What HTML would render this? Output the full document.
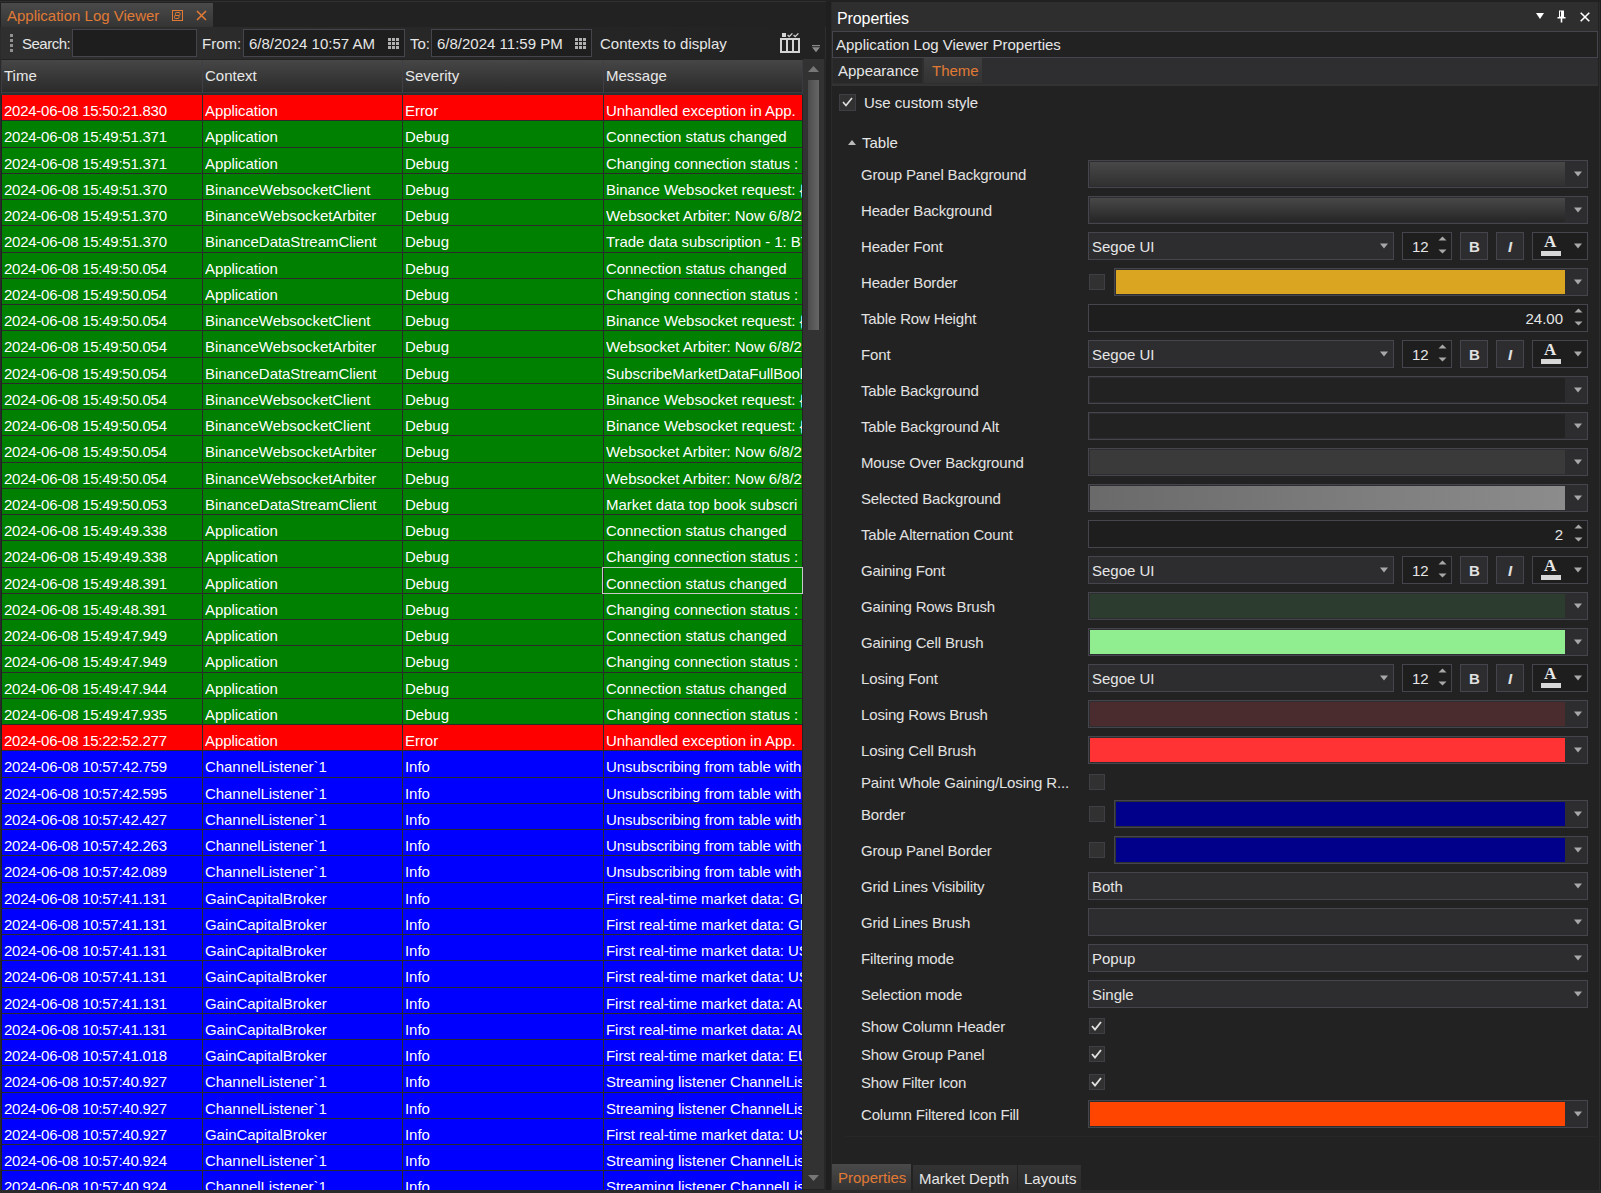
<!DOCTYPE html>
<html><head><meta charset="utf-8">
<style>
*{box-sizing:border-box;margin:0;padding:0}
html,body{width:1601px;height:1193px;overflow:hidden;background:#1f1f1f;font-family:"Liberation Sans",sans-serif;font-size:15px;color:#e6e6e6}
.a{position:absolute}
/* left doc panel */
#docpanel{position:absolute;left:0;top:2px;width:826px;height:1188px;background:#222;border-left:1px solid #2a2a2a;border-right:1px solid #2e2e2e}
#tabstrip{position:absolute;left:0;top:2px;width:826px;height:25px;background:#222}
#doctab{position:absolute;left:1px;top:3px;width:212px;height:24px;background:linear-gradient(#4a4a4a,#343434);}
#doctab .t{position:absolute;left:6px;top:4px;color:#e07a35;font-size:15px;white-space:nowrap}
#toolbar{position:absolute;left:1px;top:27px;width:824px;height:32px;background:linear-gradient(90deg,#2f2f2f,#262626 60%,#222)}
.grip{position:absolute;left:9px;width:3px;height:3px;background:#909090}
.tl{position:absolute;white-space:nowrap;color:#e6e6e6}
.box{position:absolute;background:#1e1e1e;border:1px solid #45454d}
.gicon{position:absolute;width:11px;height:11px}
/* table */
#hdr{position:absolute;left:1px;top:60px;width:802px;height:35px;background:linear-gradient(#464646,#2a2a2a);border-left:1px solid #3c3c42;border-right:1px solid #3a3a40;border-bottom:2px solid #283034;box-shadow:inset 0 -1px 0 #3c3c42}
.hs{position:absolute;top:0;width:1px;height:33px;background:#3e3e44}
.ht{position:absolute;top:7px;white-space:nowrap;color:#e8e8e8}
#body{position:absolute;left:2px;top:95px;width:800px;height:1095px;background:#2a2a2a;overflow:hidden}
.row{position:absolute;left:0;width:800px;color:#fff;white-space:nowrap;letter-spacing:-0.05px}
.row .c1{letter-spacing:-0.25px}
.row span{position:absolute;top:7px;overflow:hidden}
.c1{left:2px;width:198px}
.c2{left:203px;width:197px}
.c3{left:403px;width:198px}
.c4{left:604px;width:196px}
.vl{position:absolute;top:95px;width:1px;height:1095px;background:#2a2a2a}
#scroll{position:absolute;left:803px;top:59px;width:21px;height:1130px;background:#323232}
#thumb{position:absolute;left:5px;top:21px;width:11px;height:250px;background:linear-gradient(90deg,#4c4c4c,#666)}
/* properties panel */
#ppanel{position:absolute;left:831px;top:2px;width:769px;height:1188px;background:#222;border-left:1px solid #2a2a2a;border-right:1px solid #2c2c2c}
#ptbar{position:absolute;left:832px;top:2px;width:766px;height:84px;background:#2e2e2e}
#ptitle{position:absolute;left:837px;top:10px;font-size:16px;color:#fff;letter-spacing:-0.1px}
#phead{position:absolute;left:832px;top:31px;width:766px;height:27px;background:#222;border:1px solid #45454d}
#phead span{position:absolute;left:3px;top:4px}
#ptabs{position:absolute;left:832px;top:58px;width:766px;height:28px;background:#2e2e30;border-bottom:2px solid #333}
.ptab{position:absolute;top:0;height:25px;white-space:nowrap}
.ptab span{position:absolute;left:5px;top:4px}
#pcontent{position:absolute;left:832px;top:86px;width:766px;height:1077px;background:#222}
.plabel{position:absolute;left:861px;white-space:nowrap;color:#e2e2e2;letter-spacing:-0.15px;height:26px;line-height:26px;margin-top:1px}
.ed{position:absolute;height:28px;background:#2d2d30;border:1px solid #45454d}
.ed .sw{position:absolute;left:1px;top:1px;right:22px;bottom:1px}
.ed .dd{position:absolute;right:5px;top:10px}
.ed.num{background:#1e1e1e}
.nv{position:absolute;right:24px;top:5px}
.spin{position:absolute;right:4px;top:3px}
.fv{position:absolute;left:3px;top:5px}
.fsize{background:#1e1e1e}
.fsv{position:absolute;left:9px;top:5px}
.btn b{position:absolute;left:8px;top:5px;font-weight:bold;color:#e0e0e0}
.btn i{position:absolute;left:11px;top:5px;font-weight:bold;color:#e0e0e0}
.fcol{background:#1e1e1e}
.fa{position:absolute;left:11px;top:-1px;font-family:"Liberation Serif",serif;font-size:17px;font-weight:bold;color:#e8e8e8}
.fbar{position:absolute;left:8px;top:18px;width:20px;height:5px;background:#d8d8d8}
.cb{position:absolute;width:17px;height:17px;background:#313131;border:1px solid #3e3e44}
.btab{position:absolute;height:26px;white-space:nowrap;background:linear-gradient(#333,#2a2a2a)}
.btab span{position:absolute;left:6px;top:5px}
</style></head><body>
<!-- top dark strip -->
<div class="a" style="left:0;top:0;width:1601px;height:2px;background:#212121"></div>
<div class="a" style="left:0;top:1px;width:826px;height:1px;background:#303030"></div>

<div id="docpanel"></div>
<div id="tabstrip"></div>
<div id="doctab"><span class="t">Application Log Viewer</span>
  <svg class="a" style="left:171px;top:7px" width="11" height="11" viewBox="0 0 11 11"><rect x="0.5" y="0.5" width="10" height="10" fill="none" stroke="#e07a35" stroke-width="1"/><rect x="3.5" y="2.5" width="4.5" height="3" rx="0.8" fill="none" stroke="#e07a35" stroke-width="1"/><rect x="2.5" y="5.5" width="4.5" height="3" rx="0.8" fill="none" stroke="#e07a35" stroke-width="1"/></svg>
  <svg class="a" style="left:195px;top:7px" width="11" height="11" viewBox="0 0 11 11"><path d="M1 1L10 10M10 1L1 10" stroke="#e07a35" stroke-width="1.6"/></svg>
</div>
<div id="toolbar">
  <div class="grip" style="top:7px"></div><div class="grip" style="top:12px"></div><div class="grip" style="top:17px"></div><div class="grip" style="top:22px"></div>
</div>
<span class="tl" style="left:22px;top:35px;letter-spacing:-0.5px">Search:</span>
<div class="box" style="left:72px;top:29px;width:125px;height:28px"></div>
<span class="tl" style="left:202px;top:35px">From:</span>
<div class="box" style="left:243px;top:29px;width:162px;height:28px"></div>
<span class="tl" style="left:249px;top:35px">6/8/2024 10:57 AM</span>
<svg class="gicon" style="left:388px;top:38px" viewBox="0 0 11 11" width="11" height="11"><g fill="#b0b0b0"><rect x="0" y="0" width="3" height="3"/><rect x="4" y="0" width="3" height="3"/><rect x="8" y="0" width="3" height="3"/><rect x="0" y="4" width="3" height="3"/><rect x="4" y="4" width="3" height="3"/><rect x="8" y="4" width="3" height="3"/><rect x="0" y="8" width="3" height="3"/><rect x="4" y="8" width="3" height="3"/><rect x="8" y="8" width="3" height="3"/></g></svg>
<span class="tl" style="left:410px;top:35px">To:</span>
<div class="box" style="left:431px;top:29px;width:161px;height:28px"></div>
<span class="tl" style="left:437px;top:35px">6/8/2024 11:59 PM</span>
<svg class="gicon" style="left:575px;top:38px" viewBox="0 0 11 11" width="11" height="11"><g fill="#b0b0b0"><rect x="0" y="0" width="3" height="3"/><rect x="4" y="0" width="3" height="3"/><rect x="8" y="0" width="3" height="3"/><rect x="0" y="4" width="3" height="3"/><rect x="4" y="4" width="3" height="3"/><rect x="8" y="4" width="3" height="3"/><rect x="0" y="8" width="3" height="3"/><rect x="4" y="8" width="3" height="3"/><rect x="8" y="8" width="3" height="3"/></g></svg>
<span class="tl" style="left:600px;top:35px">Contexts to display</span>
<svg class="a" style="left:779px;top:32px" width="22" height="22" viewBox="0 0 22 22"><rect x="3" y="1" width="4" height="4" fill="#d4d4d4"/><path d="M8.6 3L10.2 4.6L13.4 1.4M14.6 3L16.2 4.6L19.4 1.4" stroke="#d4d4d4" stroke-width="1.3" fill="none"/><rect x="2" y="7" width="18" height="13" fill="none" stroke="#d4d4d4" stroke-width="2"/><path d="M8 7V20M14 7V20" stroke="#d4d4d4" stroke-width="2"/></svg>
<svg class="a" style="left:811px;top:44px" width="10" height="9" viewBox="0 0 10 9"><rect x="1" y="1" width="8" height="1.2" fill="#8a8a8a"/><path d="M1 3.2H9L5 8.2Z" fill="#8a8a8a"/></svg>

<!-- table header -->
<div id="hdr">
  <div class="hs" style="left:200px"></div>
  <div class="hs" style="left:400px"></div>
  <div class="hs" style="left:601px"></div>
  <span class="ht" style="left:2px">Time</span>
  <span class="ht" style="left:203px">Context</span>
  <span class="ht" style="left:403px">Severity</span>
  <span class="ht" style="left:604px">Message</span>
</div>
<div id="body">
<div class="row" style="top:0px;height:25px;background:#ff0000"><span class="c1">2024-06-08 15:50:21.830</span><span class="c2">Application</span><span class="c3">Error</span><span class="c4">Unhandled exception in App.</span></div>
<div class="row" style="top:26px;height:26px;background:#008000"><span class="c1">2024-06-08 15:49:51.371</span><span class="c2">Application</span><span class="c3">Debug</span><span class="c4">Connection status changed</span></div>
<div class="row" style="top:53px;height:25px;background:#008000"><span class="c1">2024-06-08 15:49:51.371</span><span class="c2">Application</span><span class="c3">Debug</span><span class="c4">Changing connection status :</span></div>
<div class="row" style="top:79px;height:25px;background:#008000"><span class="c1">2024-06-08 15:49:51.370</span><span class="c2">BinanceWebsocketClient</span><span class="c3">Debug</span><span class="c4">Binance Websocket request: {'</span></div>
<div class="row" style="top:105px;height:25px;background:#008000"><span class="c1">2024-06-08 15:49:51.370</span><span class="c2">BinanceWebsocketArbiter</span><span class="c3">Debug</span><span class="c4">Websocket Arbiter: Now 6/8/2</span></div>
<div class="row" style="top:131px;height:26px;background:#008000"><span class="c1">2024-06-08 15:49:51.370</span><span class="c2">BinanceDataStreamClient</span><span class="c3">Debug</span><span class="c4">Trade data subscription - 1: BT</span></div>
<div class="row" style="top:158px;height:25px;background:#008000"><span class="c1">2024-06-08 15:49:50.054</span><span class="c2">Application</span><span class="c3">Debug</span><span class="c4">Connection status changed</span></div>
<div class="row" style="top:184px;height:25px;background:#008000"><span class="c1">2024-06-08 15:49:50.054</span><span class="c2">Application</span><span class="c3">Debug</span><span class="c4">Changing connection status :</span></div>
<div class="row" style="top:210px;height:25px;background:#008000"><span class="c1">2024-06-08 15:49:50.054</span><span class="c2">BinanceWebsocketClient</span><span class="c3">Debug</span><span class="c4">Binance Websocket request: {'</span></div>
<div class="row" style="top:236px;height:26px;background:#008000"><span class="c1">2024-06-08 15:49:50.054</span><span class="c2">BinanceWebsocketArbiter</span><span class="c3">Debug</span><span class="c4">Websocket Arbiter: Now 6/8/2</span></div>
<div class="row" style="top:263px;height:25px;background:#008000"><span class="c1">2024-06-08 15:49:50.054</span><span class="c2">BinanceDataStreamClient</span><span class="c3">Debug</span><span class="c4">SubscribeMarketDataFullBook</span></div>
<div class="row" style="top:289px;height:25px;background:#008000"><span class="c1">2024-06-08 15:49:50.054</span><span class="c2">BinanceWebsocketClient</span><span class="c3">Debug</span><span class="c4">Binance Websocket request: {'</span></div>
<div class="row" style="top:315px;height:25px;background:#008000"><span class="c1">2024-06-08 15:49:50.054</span><span class="c2">BinanceWebsocketClient</span><span class="c3">Debug</span><span class="c4">Binance Websocket request: {'</span></div>
<div class="row" style="top:341px;height:26px;background:#008000"><span class="c1">2024-06-08 15:49:50.054</span><span class="c2">BinanceWebsocketArbiter</span><span class="c3">Debug</span><span class="c4">Websocket Arbiter: Now 6/8/2</span></div>
<div class="row" style="top:368px;height:25px;background:#008000"><span class="c1">2024-06-08 15:49:50.054</span><span class="c2">BinanceWebsocketArbiter</span><span class="c3">Debug</span><span class="c4">Websocket Arbiter: Now 6/8/2</span></div>
<div class="row" style="top:394px;height:25px;background:#008000"><span class="c1">2024-06-08 15:49:50.053</span><span class="c2">BinanceDataStreamClient</span><span class="c3">Debug</span><span class="c4">Market data top book subscri</span></div>
<div class="row" style="top:420px;height:25px;background:#008000"><span class="c1">2024-06-08 15:49:49.338</span><span class="c2">Application</span><span class="c3">Debug</span><span class="c4">Connection status changed</span></div>
<div class="row" style="top:446px;height:26px;background:#008000"><span class="c1">2024-06-08 15:49:49.338</span><span class="c2">Application</span><span class="c3">Debug</span><span class="c4">Changing connection status :</span></div>
<div class="row" style="top:473px;height:25px;background:#008000"><span class="c1">2024-06-08 15:49:48.391</span><span class="c2">Application</span><span class="c3">Debug</span><span class="c4">Connection status changed</span></div>
<div class="row" style="top:499px;height:25px;background:#008000"><span class="c1">2024-06-08 15:49:48.391</span><span class="c2">Application</span><span class="c3">Debug</span><span class="c4">Changing connection status :</span></div>
<div class="row" style="top:525px;height:25px;background:#008000"><span class="c1">2024-06-08 15:49:47.949</span><span class="c2">Application</span><span class="c3">Debug</span><span class="c4">Connection status changed</span></div>
<div class="row" style="top:551px;height:26px;background:#008000"><span class="c1">2024-06-08 15:49:47.949</span><span class="c2">Application</span><span class="c3">Debug</span><span class="c4">Changing connection status :</span></div>
<div class="row" style="top:578px;height:25px;background:#008000"><span class="c1">2024-06-08 15:49:47.944</span><span class="c2">Application</span><span class="c3">Debug</span><span class="c4">Connection status changed</span></div>
<div class="row" style="top:604px;height:25px;background:#008000"><span class="c1">2024-06-08 15:49:47.935</span><span class="c2">Application</span><span class="c3">Debug</span><span class="c4">Changing connection status :</span></div>
<div class="row" style="top:630px;height:25px;background:#ff0000"><span class="c1">2024-06-08 15:22:52.277</span><span class="c2">Application</span><span class="c3">Error</span><span class="c4">Unhandled exception in App.</span></div>
<div class="row" style="top:656px;height:26px;background:#0000ff"><span class="c1">2024-06-08 10:57:42.759</span><span class="c2">ChannelListener`1</span><span class="c3">Info</span><span class="c4">Unsubscribing from table with</span></div>
<div class="row" style="top:683px;height:25px;background:#0000ff"><span class="c1">2024-06-08 10:57:42.595</span><span class="c2">ChannelListener`1</span><span class="c3">Info</span><span class="c4">Unsubscribing from table with</span></div>
<div class="row" style="top:709px;height:25px;background:#0000ff"><span class="c1">2024-06-08 10:57:42.427</span><span class="c2">ChannelListener`1</span><span class="c3">Info</span><span class="c4">Unsubscribing from table with</span></div>
<div class="row" style="top:735px;height:25px;background:#0000ff"><span class="c1">2024-06-08 10:57:42.263</span><span class="c2">ChannelListener`1</span><span class="c3">Info</span><span class="c4">Unsubscribing from table with</span></div>
<div class="row" style="top:761px;height:26px;background:#0000ff"><span class="c1">2024-06-08 10:57:42.089</span><span class="c2">ChannelListener`1</span><span class="c3">Info</span><span class="c4">Unsubscribing from table with</span></div>
<div class="row" style="top:788px;height:25px;background:#0000ff"><span class="c1">2024-06-08 10:57:41.131</span><span class="c2">GainCapitalBroker</span><span class="c3">Info</span><span class="c4">First real-time market data: GI</span></div>
<div class="row" style="top:814px;height:25px;background:#0000ff"><span class="c1">2024-06-08 10:57:41.131</span><span class="c2">GainCapitalBroker</span><span class="c3">Info</span><span class="c4">First real-time market data: GI</span></div>
<div class="row" style="top:840px;height:25px;background:#0000ff"><span class="c1">2024-06-08 10:57:41.131</span><span class="c2">GainCapitalBroker</span><span class="c3">Info</span><span class="c4">First real-time market data: US</span></div>
<div class="row" style="top:866px;height:26px;background:#0000ff"><span class="c1">2024-06-08 10:57:41.131</span><span class="c2">GainCapitalBroker</span><span class="c3">Info</span><span class="c4">First real-time market data: US</span></div>
<div class="row" style="top:893px;height:25px;background:#0000ff"><span class="c1">2024-06-08 10:57:41.131</span><span class="c2">GainCapitalBroker</span><span class="c3">Info</span><span class="c4">First real-time market data: AU</span></div>
<div class="row" style="top:919px;height:25px;background:#0000ff"><span class="c1">2024-06-08 10:57:41.131</span><span class="c2">GainCapitalBroker</span><span class="c3">Info</span><span class="c4">First real-time market data: AU</span></div>
<div class="row" style="top:945px;height:25px;background:#0000ff"><span class="c1">2024-06-08 10:57:41.018</span><span class="c2">GainCapitalBroker</span><span class="c3">Info</span><span class="c4">First real-time market data: EU</span></div>
<div class="row" style="top:971px;height:26px;background:#0000ff"><span class="c1">2024-06-08 10:57:40.927</span><span class="c2">ChannelListener`1</span><span class="c3">Info</span><span class="c4">Streaming listener ChannelList</span></div>
<div class="row" style="top:998px;height:25px;background:#0000ff"><span class="c1">2024-06-08 10:57:40.927</span><span class="c2">ChannelListener`1</span><span class="c3">Info</span><span class="c4">Streaming listener ChannelList</span></div>
<div class="row" style="top:1024px;height:25px;background:#0000ff"><span class="c1">2024-06-08 10:57:40.927</span><span class="c2">GainCapitalBroker</span><span class="c3">Info</span><span class="c4">First real-time market data: US</span></div>
<div class="row" style="top:1050px;height:25px;background:#0000ff"><span class="c1">2024-06-08 10:57:40.924</span><span class="c2">ChannelListener`1</span><span class="c3">Info</span><span class="c4">Streaming listener ChannelList</span></div>
<div class="row" style="top:1076px;height:26px;background:#0000ff"><span class="c1">2024-06-08 10:57:40.924</span><span class="c2">ChannelListener`1</span><span class="c3">Info</span><span class="c4">Streaming listener ChannelList</span></div>
</div>
<div class="vl" style="left:202px"></div>
<div class="vl" style="left:402px"></div>
<div class="vl" style="left:603px"></div>
<div class="a" style="left:602px;top:567px;width:201px;height:27px;border:1px solid #c8c8c8"></div>
<div id="scroll">
  <svg class="a" style="left:5px;top:7px" width="11" height="6" viewBox="0 0 11 6"><path d="M0 6H11L5.5 0Z" fill="#777"/></svg>
  <div id="thumb"></div>
  <svg class="a" style="left:5px;top:1116px" width="11" height="6" viewBox="0 0 11 6"><path d="M0 0H11L5.5 6Z" fill="#777"/></svg>
</div>
<div class="a" style="left:824px;top:59px;width:2px;height:1131px;background:#272727"></div>

<!-- properties panel -->
<div id="ppanel"></div><div id="ptbar"></div>
<span id="ptitle">Properties</span>
<svg class="a" style="left:1536px;top:13px" width="8" height="6" viewBox="0 0 8 6"><path d="M0 0H8L4 6Z" fill="#fff"/></svg>
<svg class="a" style="left:1557px;top:10px" width="9" height="13" viewBox="0 0 9 13"><path d="M2 0.5H7V7H8.5V8.5H5.3V12.5H3.7V8.5H0.5V7H2Z" fill="#fff"/><rect x="3" y="1.5" width="1" height="5" fill="#2e2e2e"/></svg>
<svg class="a" style="left:1580px;top:12px" width="10" height="10" viewBox="0 0 10 10"><path d="M0.7 0.7L9.3 9.3M9.3 0.7L0.7 9.3" stroke="#fff" stroke-width="1.6"/></svg>
<div id="phead"><span>Application Log Viewer Properties</span></div>
<div id="ptabs">
  <div class="ptab" style="left:1px;width:89px;background:#282828"><span>Appearance</span></div>
  <div class="ptab" style="left:92px;width:58px;background:linear-gradient(#3e3e3e,#333)"><span style="color:#e07a35;left:8px">Theme</span></div>
</div>
<div id="pcontent"></div>
<div class="cb" style="left:839px;top:94px"></div>
<svg class="a" style="left:842px;top:97px" width="11" height="10" viewBox="0 0 11 10"><path d="M1 5L4 8.5L10 1" stroke="#e0e0e0" stroke-width="1.6" fill="none"/></svg>
<span class="tl" style="left:864px;top:94px">Use custom style</span>
<svg class="a" style="left:848px;top:140px" width="8" height="5" viewBox="0 0 8 5"><path d="M0 5H8L4 0Z" fill="#bbb"/></svg>
<span class="tl" style="left:862px;top:134px">Table</span>

<div class="plabel" style="top:161px">Group Panel Background</div>
<div class="ed" style="top:160px;left:1088px;width:500px"><div class="sw" style="background:linear-gradient(#484848,#303030)"></div><svg class="dd" width="8" height="6" viewBox="0 0 8 6"><path d="M0 0.5H8L4 5.5Z" fill="#a8a8a8"/></svg></div>
<div class="plabel" style="top:197px">Header Background</div>
<div class="ed" style="top:196px;left:1088px;width:500px"><div class="sw" style="background:linear-gradient(#484848,#262626)"></div><svg class="dd" width="8" height="6" viewBox="0 0 8 6"><path d="M0 0.5H8L4 5.5Z" fill="#a8a8a8"/></svg></div>
<div class="plabel" style="top:233px">Header Font</div>
<div class="ed fcombo" style="top:232px;left:1088px;width:306px"><span class="fv">Segoe UI</span><svg class="dd" width="8" height="6" viewBox="0 0 8 6"><path d="M0 0.5H8L4 5.5Z" fill="#a8a8a8"/></svg></div>
<div class="ed fsize" style="top:232px;left:1402px;width:50px"><span class="fsv">12</span><svg class="spin" width="9" height="18" viewBox="0 0 9 18"><path d="M0.5 4.5L4.5 0.5L8.5 4.5Z M0.5 13.5H8.5L4.5 17.5Z" fill="#a8a8a8"/></svg></div>
<div class="ed btn" style="top:232px;left:1460px;width:28px"><b>B</b></div>
<div class="ed btn" style="top:232px;left:1496px;width:28px"><i>I</i></div>
<div class="ed fcol" style="top:232px;left:1532px;width:56px"><span class="fa">A</span><div class="fbar"></div><svg class="dd" width="8" height="6" viewBox="0 0 8 6"><path d="M0 0.5H8L4 5.5Z" fill="#a8a8a8"/></svg></div>
<div class="plabel" style="top:269px">Header Border</div>
<div class="cb" style="top:274px;left:1089px;width:16px;height:16px"></div>
<div class="ed" style="top:268px;left:1114px;width:474px"><div class="sw" style="background:#daa520"></div><svg class="dd" width="8" height="6" viewBox="0 0 8 6"><path d="M0 0.5H8L4 5.5Z" fill="#a8a8a8"/></svg></div>
<div class="plabel" style="top:305px">Table Row Height</div>
<div class="ed num" style="top:304px;left:1088px;width:500px"><span class="nv">24.00</span><svg class="spin" width="9" height="18" viewBox="0 0 9 18"><path d="M0.5 4.5L4.5 0.5L8.5 4.5Z M0.5 13.5H8.5L4.5 17.5Z" fill="#a8a8a8"/></svg></div>
<div class="plabel" style="top:341px">Font</div>
<div class="ed fcombo" style="top:340px;left:1088px;width:306px"><span class="fv">Segoe UI</span><svg class="dd" width="8" height="6" viewBox="0 0 8 6"><path d="M0 0.5H8L4 5.5Z" fill="#a8a8a8"/></svg></div>
<div class="ed fsize" style="top:340px;left:1402px;width:50px"><span class="fsv">12</span><svg class="spin" width="9" height="18" viewBox="0 0 9 18"><path d="M0.5 4.5L4.5 0.5L8.5 4.5Z M0.5 13.5H8.5L4.5 17.5Z" fill="#a8a8a8"/></svg></div>
<div class="ed btn" style="top:340px;left:1460px;width:28px"><b>B</b></div>
<div class="ed btn" style="top:340px;left:1496px;width:28px"><i>I</i></div>
<div class="ed fcol" style="top:340px;left:1532px;width:56px"><span class="fa">A</span><div class="fbar"></div><svg class="dd" width="8" height="6" viewBox="0 0 8 6"><path d="M0 0.5H8L4 5.5Z" fill="#a8a8a8"/></svg></div>
<div class="plabel" style="top:377px">Table Background</div>
<div class="ed" style="top:376px;left:1088px;width:500px"><div class="sw" style="background:#222222"></div><svg class="dd" width="8" height="6" viewBox="0 0 8 6"><path d="M0 0.5H8L4 5.5Z" fill="#a8a8a8"/></svg></div>
<div class="plabel" style="top:413px">Table Background Alt</div>
<div class="ed" style="top:412px;left:1088px;width:500px"><div class="sw" style="background:#222222"></div><svg class="dd" width="8" height="6" viewBox="0 0 8 6"><path d="M0 0.5H8L4 5.5Z" fill="#a8a8a8"/></svg></div>
<div class="plabel" style="top:449px">Mouse Over Background</div>
<div class="ed" style="top:448px;left:1088px;width:500px"><div class="sw" style="background:#3a3a3a"></div><svg class="dd" width="8" height="6" viewBox="0 0 8 6"><path d="M0 0.5H8L4 5.5Z" fill="#a8a8a8"/></svg></div>
<div class="plabel" style="top:485px">Selected Background</div>
<div class="ed" style="top:484px;left:1088px;width:500px"><div class="sw" style="background:linear-gradient(90deg,#6a6a6a,#8c8c8c)"></div><svg class="dd" width="8" height="6" viewBox="0 0 8 6"><path d="M0 0.5H8L4 5.5Z" fill="#a8a8a8"/></svg></div>
<div class="plabel" style="top:521px">Table Alternation Count</div>
<div class="ed num" style="top:520px;left:1088px;width:500px"><span class="nv">2</span><svg class="spin" width="9" height="18" viewBox="0 0 9 18"><path d="M0.5 4.5L4.5 0.5L8.5 4.5Z M0.5 13.5H8.5L4.5 17.5Z" fill="#a8a8a8"/></svg></div>
<div class="plabel" style="top:557px">Gaining Font</div>
<div class="ed fcombo" style="top:556px;left:1088px;width:306px"><span class="fv">Segoe UI</span><svg class="dd" width="8" height="6" viewBox="0 0 8 6"><path d="M0 0.5H8L4 5.5Z" fill="#a8a8a8"/></svg></div>
<div class="ed fsize" style="top:556px;left:1402px;width:50px"><span class="fsv">12</span><svg class="spin" width="9" height="18" viewBox="0 0 9 18"><path d="M0.5 4.5L4.5 0.5L8.5 4.5Z M0.5 13.5H8.5L4.5 17.5Z" fill="#a8a8a8"/></svg></div>
<div class="ed btn" style="top:556px;left:1460px;width:28px"><b>B</b></div>
<div class="ed btn" style="top:556px;left:1496px;width:28px"><i>I</i></div>
<div class="ed fcol" style="top:556px;left:1532px;width:56px"><span class="fa">A</span><div class="fbar"></div><svg class="dd" width="8" height="6" viewBox="0 0 8 6"><path d="M0 0.5H8L4 5.5Z" fill="#a8a8a8"/></svg></div>
<div class="plabel" style="top:593px">Gaining Rows Brush</div>
<div class="ed" style="top:592px;left:1088px;width:500px"><div class="sw" style="background:#2c3d30"></div><svg class="dd" width="8" height="6" viewBox="0 0 8 6"><path d="M0 0.5H8L4 5.5Z" fill="#a8a8a8"/></svg></div>
<div class="plabel" style="top:629px">Gaining Cell Brush</div>
<div class="ed" style="top:628px;left:1088px;width:500px"><div class="sw" style="background:#90ee90"></div><svg class="dd" width="8" height="6" viewBox="0 0 8 6"><path d="M0 0.5H8L4 5.5Z" fill="#a8a8a8"/></svg></div>
<div class="plabel" style="top:665px">Losing Font</div>
<div class="ed fcombo" style="top:664px;left:1088px;width:306px"><span class="fv">Segoe UI</span><svg class="dd" width="8" height="6" viewBox="0 0 8 6"><path d="M0 0.5H8L4 5.5Z" fill="#a8a8a8"/></svg></div>
<div class="ed fsize" style="top:664px;left:1402px;width:50px"><span class="fsv">12</span><svg class="spin" width="9" height="18" viewBox="0 0 9 18"><path d="M0.5 4.5L4.5 0.5L8.5 4.5Z M0.5 13.5H8.5L4.5 17.5Z" fill="#a8a8a8"/></svg></div>
<div class="ed btn" style="top:664px;left:1460px;width:28px"><b>B</b></div>
<div class="ed btn" style="top:664px;left:1496px;width:28px"><i>I</i></div>
<div class="ed fcol" style="top:664px;left:1532px;width:56px"><span class="fa">A</span><div class="fbar"></div><svg class="dd" width="8" height="6" viewBox="0 0 8 6"><path d="M0 0.5H8L4 5.5Z" fill="#a8a8a8"/></svg></div>
<div class="plabel" style="top:701px">Losing Rows Brush</div>
<div class="ed" style="top:700px;left:1088px;width:500px"><div class="sw" style="background:#4a2c2f"></div><svg class="dd" width="8" height="6" viewBox="0 0 8 6"><path d="M0 0.5H8L4 5.5Z" fill="#a8a8a8"/></svg></div>
<div class="plabel" style="top:737px">Losing Cell Brush</div>
<div class="ed" style="top:736px;left:1088px;width:500px"><div class="sw" style="background:#ff3333"></div><svg class="dd" width="8" height="6" viewBox="0 0 8 6"><path d="M0 0.5H8L4 5.5Z" fill="#a8a8a8"/></svg></div>
<div class="plabel" style="top:769px">Paint Whole Gaining/Losing R...</div>
<div class="cb" style="top:774px;left:1089px;width:16px;height:16px"></div>
<div class="plabel" style="top:801px">Border</div>
<div class="cb" style="top:806px;left:1089px;width:16px;height:16px"></div>
<div class="ed" style="top:800px;left:1114px;width:474px"><div class="sw" style="background:#00008b"></div><svg class="dd" width="8" height="6" viewBox="0 0 8 6"><path d="M0 0.5H8L4 5.5Z" fill="#a8a8a8"/></svg></div>
<div class="plabel" style="top:837px">Group Panel Border</div>
<div class="cb" style="top:842px;left:1089px;width:16px;height:16px"></div>
<div class="ed" style="top:836px;left:1114px;width:474px"><div class="sw" style="background:#00008b"></div><svg class="dd" width="8" height="6" viewBox="0 0 8 6"><path d="M0 0.5H8L4 5.5Z" fill="#a8a8a8"/></svg></div>
<div class="plabel" style="top:873px">Grid Lines Visibility</div>
<div class="ed" style="top:872px;left:1088px;width:500px"><span class="fv">Both</span><svg class="dd" width="8" height="6" viewBox="0 0 8 6"><path d="M0 0.5H8L4 5.5Z" fill="#a8a8a8"/></svg></div>
<div class="plabel" style="top:909px">Grid Lines Brush</div>
<div class="ed" style="top:908px;left:1088px;width:500px"><div class="sw" style="background:#2d2d30"></div><svg class="dd" width="8" height="6" viewBox="0 0 8 6"><path d="M0 0.5H8L4 5.5Z" fill="#a8a8a8"/></svg></div>
<div class="plabel" style="top:945px">Filtering mode</div>
<div class="ed" style="top:944px;left:1088px;width:500px"><span class="fv">Popup</span><svg class="dd" width="8" height="6" viewBox="0 0 8 6"><path d="M0 0.5H8L4 5.5Z" fill="#a8a8a8"/></svg></div>
<div class="plabel" style="top:981px">Selection mode</div>
<div class="ed" style="top:980px;left:1088px;width:500px"><span class="fv">Single</span><svg class="dd" width="8" height="6" viewBox="0 0 8 6"><path d="M0 0.5H8L4 5.5Z" fill="#a8a8a8"/></svg></div>
<div class="plabel" style="top:1013px">Show Column Header</div>
<div class="cb" style="top:1018px;left:1089px;width:16px;height:16px"></div>
<svg class="a" style="left:1091px;top:1021px" width="11" height="10" viewBox="0 0 11 10"><path d="M1 5L4 8.5L10 1" stroke="#e0e0e0" stroke-width="1.9" fill="none"/></svg>
<div class="plabel" style="top:1041px">Show Group Panel</div>
<div class="cb" style="top:1046px;left:1089px;width:16px;height:16px"></div>
<svg class="a" style="left:1091px;top:1049px" width="11" height="10" viewBox="0 0 11 10"><path d="M1 5L4 8.5L10 1" stroke="#e0e0e0" stroke-width="1.9" fill="none"/></svg>
<div class="plabel" style="top:1069px">Show Filter Icon</div>
<div class="cb" style="top:1074px;left:1089px;width:16px;height:16px"></div>
<svg class="a" style="left:1091px;top:1077px" width="11" height="10" viewBox="0 0 11 10"><path d="M1 5L4 8.5L10 1" stroke="#e0e0e0" stroke-width="1.9" fill="none"/></svg>
<div class="plabel" style="top:1101px">Column Filtered Icon Fill</div>
<div class="ed" style="top:1100px;left:1088px;width:500px"><div class="sw" style="background:#ff4500"></div><svg class="dd" width="8" height="6" viewBox="0 0 8 6"><path d="M0 0.5H8L4 5.5Z" fill="#a8a8a8"/></svg></div>

<div class="a" style="left:845px;top:1136px;width:752px;height:1px;background:#262626"></div>
<!-- bottom tabs -->
<div class="btab" style="left:832px;top:1164px;width:79px;background:linear-gradient(#4a4a4a,#333)"><span style="color:#e07a35">Properties</span></div>
<div class="btab" style="left:913px;top:1165px;width:104px"><span>Market Depth</span></div>
<div class="btab" style="left:1018px;top:1165px;width:63px"><span>Layouts</span></div>
<div class="a" style="left:0;top:1190px;width:1601px;height:3px;background:#2a2a2a"></div>
</body></html>
